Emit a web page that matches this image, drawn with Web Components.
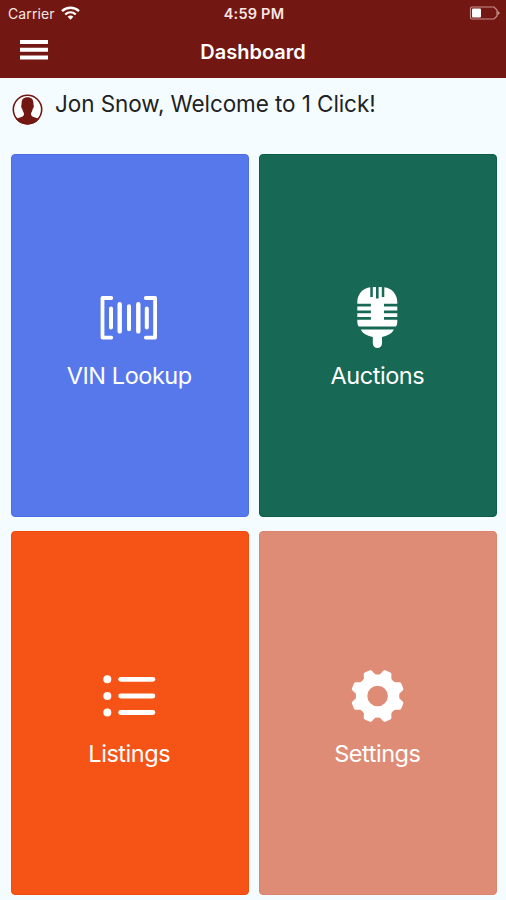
<!DOCTYPE html>
<html lang="en">
<head>
<meta charset="utf-8">
<meta name="viewport" content="width=device-width, initial-scale=1">
<title>Dashboard</title>
<style>
    body {
        margin: 0;
        background: #f5fcff;
        font-family: Inter, Roboto, "Liberation Sans", sans-serif;
    }
</style>
</head>
<body>
<dashboard-page>
    <app-header slot="header" carrier="Carrier" time="4:59 PM">Dashboard</app-header>
    <user-greeting slot="greeting">Jon Snow, Welcome to 1 Click!</user-greeting>
    <menu-tile icon="barcode" color="#5678eb" edge="#4b6de7">VIN Lookup</menu-tile>
    <menu-tile icon="mic" color="#176854" edge="#0f5d47">Auctions</menu-tile>
    <menu-tile icon="list" color="#f65417" edge="#ef4b0c">Listings</menu-tile>
    <menu-tile icon="gear" color="#de8c76" edge="#dc846e">Settings</menu-tile>
</dashboard-page>

<script>
const icons = {
    barcode: `
        <g fill="none" stroke="#fff" stroke-linecap="round" stroke-linejoin="round">
            <path stroke-width="3.8" d="M14.300 12H5.500V51.600H14.300M48.800 12H58.100V51.600H48.800"/>
            <path stroke-width="4" d="M14 22.500V41.500M32 20.300V43.200M49.800 22.500V41.500"/>
            <path stroke-width="4.400" d="M22.700 18.200V45.400M41.300 18.200V45.400"/>
        </g>`,
    mic: `
        <g fill="#fff" transform="translate(0.8 0)">
            <path d="M11.500 16C11.500 8 17.500 2 24.500 1.300V11H27V1H30.200V12.500H32.800V1H36V11H38.500V1.300C45.500 2 51.500 8 51.500 16V17.800H38.200V20.500H51.500V24.400H38.200V27.200H51.500V31H38.200V33.800H51.500V36Q51.500 39 50 40.500H13Q11.500 39 11.500 36V33.800H25.100V31H11.500V27.200H25.100V24.400H11.500V20.500H25.100V17.800H11.500Z"/>
            <path d="M15 43.500H48.100C46 48 41 50 36.200 51V57.500A4.600 4.600 0 0 1 27 57.500V51C22 50 17 48 15 43.500Z"/>
        </g>`,
    list: `
        <g fill="#fff">
            <circle cx="10.300" cy="15.300" r="4"/>
            <circle cx="10.300" cy="32" r="4"/>
            <circle cx="10.300" cy="48.500" r="4"/>
            <rect x="21.300" y="12.900" width="37" height="4.800" rx="2.400"/>
            <rect x="21.300" y="29.600" width="37" height="4.800" rx="2.400"/>
            <rect x="21.300" y="46.100" width="37" height="4.800" rx="2.400"/>
        </g>`,
    gear: `<path fill="#fff" fill-rule="evenodd" d="${gearPath(32.6, 32)}"/>`
};

// Eight rounded teeth around a ring, with the hole cut out by even-odd fill
function gearPath(cx, cy) {
    const at = (r, deg) => {
        const a = deg * Math.PI / 180;
        return `${(cx + r * Math.cos(a)).toFixed(2)} ${(cy + r * Math.sin(a)).toFixed(2)}`;
    };
    let d = '';
    for (let i = 0; i < 8; i++) {
        const m = i * 45 + 22.5;
        d += `${i ? 'L' : 'M'}${at(22, m - 16)}`;
        d += `L${at(25.4, m - 10.5)}Q${at(26.9, m - 9)} ${at(26.8, m - 6)}`;
        d += `L${at(26.8, m + 6)}Q${at(26.9, m + 9)} ${at(25.4, m + 10.5)}`;
        d += `L${at(22, m + 16)}Q${at(21.2, m + 22.5)} ${at(22, m + 29)}`;
    }
    return `${d}ZM${cx - 10.3} ${cy}a10.300 10.300 0 1 0 20.600 0a10.300 10.300 0 1 0 -20.600 0Z`;
}

class AppHeader extends HTMLElement {
    constructor() {
        super();
        this.attachShadow({ mode: 'open' });
    }

    connectedCallback() {
        this.shadowRoot.innerHTML = `
            <style>
                :host {
                    display: block;
                    height: 78px;
                    background: #721711;
                    color: #fff;
                }
                svg {
                    display: block;
                }
                .status, .bar {
                    display: grid;
                    grid-template-columns: 1fr auto 1fr;
                    align-items: center;
                }
                .status {
                    height: 26px;
                    padding: 0 6px 0 8px;
                    font-size: 14px;
                    color: #f7e6e4;
                }
                .carrier {
                    display: flex;
                    align-items: center;
                    gap: 6px;
                    letter-spacing: 0.1px;
                }
                .time {
                    font-size: 14.500px;
                    font-weight: 600;
                    letter-spacing: 0.2px;
                }
                .battery {
                    justify-self: end;
                }
                .bar {
                    height: 50px;
                    padding: 0 20px;
                }
                .menu {
                    margin-bottom: 2px;
                }
                .title {
                    padding-top: 1px;
                    font-size: 20px;
                    font-weight: 600;
                }
            </style>
            <div class="status">
                <div class="carrier">
                    <span>${this.getAttribute('carrier')}</span>
                    <svg width="19" height="14" viewBox="0 0 19 14">
                        <g fill="none" stroke="#fff" stroke-width="2.300">
                            <path d="M1 5.200C5.800.6 13.200.6 18 5.200"/>
                            <path d="M4.200 8.500C7.300 5.600 11.700 5.600 14.800 8.500"/>
                        </g>
                        <path fill="#fff" d="M6.600 10.700Q9.500 8.300 12.400 10.700L9.500 13.700Z"/>
                    </svg>
                </div>
                <span class="time">${this.getAttribute('time')}</span>
                <svg class="battery" width="31" height="14" viewBox="0 0 31 14">
                    <path fill="none" stroke="#c78f8b" stroke-width="1.200" d="M3 1H25L28 4V10L25 13H3Q1.500 13 1.500 11.500V2.500Q1.500 1 3 1Z"/>
                    <path fill="#c78f8b" d="M28.500 4.500L31 7L28.500 9.500Z"/>
                    <rect x="3" y="2.500" width="9" height="9" rx="1" fill="#fff"/>
                </svg>
            </div>
            <div class="bar">
                <svg class="menu" width="28" height="20" viewBox="0 0 28 20">
                    <path fill="#fff" d="M0 0H28V4H0ZM0 7.800H28V11.800H0ZM0 15.600H28V19.600H0Z"/>
                </svg>
                <span class="title"><slot></slot></span>
            </div>
        `;
    }
}
customElements.define('app-header', AppHeader);

class UserGreeting extends HTMLElement {
    constructor() {
        super();
        this.attachShadow({ mode: 'open' });
        this.shadowRoot.innerHTML = `
            <style>
                :host {
                    display: flex;
                    align-items: flex-start;
                    gap: 12px;
                    height: 59.500px;
                    padding: 16px 12px 0;
                    box-sizing: border-box;
                    font-size: 22.500px;
                    letter-spacing: -0.08px;
                    color: #1d2224;
                }
                svg {
                    flex: none;
                }
                span {
                    line-height: 19px;
                }
            </style>
            <svg width="31" height="31" viewBox="0 0 31 31">
                <circle cx="15.500" cy="15.500" r="14.200" fill="#fff" stroke="#721711" stroke-width="1.600"/>
                <path fill="#721711" d="M15.500 3.300C20 3.300 21.700 6 21.400 10.200C22.300 11.300 21.700 14.400 20.600 15.300C20.300 17 19.600 18.300 19 19.300C19 22 20 22.500 22.400 23.200C24.400 23.800 26 24.300 27 25.200A14.900 14.900 0 0 1 4 25.200C5 24.300 6.600 23.800 8.600 23.200C11 22.500 12 22 12 19.300C11.400 18.300 10.700 17 10.400 15.300C9.300 14.400 8.700 11.300 9.600 10.200C9.300 6 11 3.300 15.500 3.300Z"/>
            </svg>
            <span><slot></slot></span>
        `;
    }
}
customElements.define('user-greeting', UserGreeting);

class MenuTile extends HTMLElement {
    constructor() {
        super();
        this.attachShadow({ mode: 'open' });
    }

    connectedCallback() {
        this.shadowRoot.innerHTML = `
            <style>
                :host {
                    display: flex;
                    flex-direction: column;
                    align-items: center;
                    box-sizing: border-box;
                    padding: 131.500px 1px 0 0;
                    border: 1px solid ${this.getAttribute('edge')};
                    border-radius: 4px;
                    background: ${this.getAttribute('color')};
                    color: #fff;
                    font-size: 23.500px;
                    letter-spacing: -0.45px;
                    line-height: 28px;
                }
                svg {
                    display: block;
                    margin-bottom: 12px;
                }
            </style>
            <svg width="64" height="64" viewBox="0 0 64 64">${icons[this.getAttribute('icon')]}</svg>
            <span><slot></slot></span>
        `;
    }
}
customElements.define('menu-tile', MenuTile);

class DashboardPage extends HTMLElement {
    constructor() {
        super();
        this.attachShadow({ mode: 'open' });
        this.shadowRoot.innerHTML = `
            <style>
                :host {
                    display: flex;
                    flex-direction: column;
                    height: 900px;
                }
                .tiles {
                    flex: 1;
                    display: grid;
                    grid-template-columns: 1fr 1fr;
                    grid-template-rows: 1fr 1fr;
                    gap: 14px 10.600px;
                    padding: 16px 9.400px 5px 11px;
                }
            </style>
            <slot name="header"></slot>
            <slot name="greeting"></slot>
            <div class="tiles"><slot></slot></div>
        `;
    }
}
customElements.define('dashboard-page', DashboardPage);
</script>
</body>
</html>
